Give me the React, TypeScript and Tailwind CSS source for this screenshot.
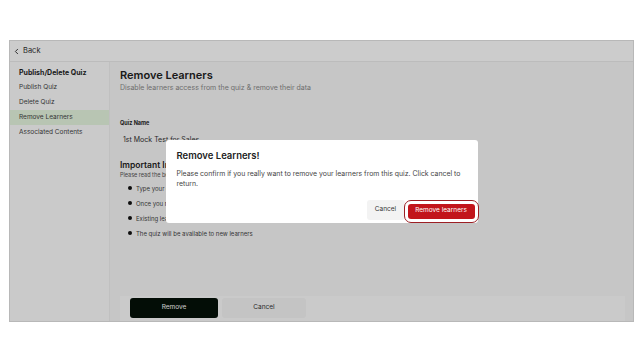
import { ChevronLeft } from 'lucide-react'

const sideItems = ['Publish Quiz', 'Delete Quiz', 'Remove Learners', 'Associated Contents']

const rules = [
  'Type your quiz name to confirm removal',
  'Once you remove, learners lose access',
  'Existing learner data will be deleted',
  'The quiz will be available to new learners',
]

export default function App() {
  return (
    <div className="min-h-screen w-full bg-white pt-[40px] pl-[9px]" style={{ fontFamily: 'Inter, "Noto Sans", sans-serif' }}>
      <div className="relative flex h-[282px] w-[625px] flex-col border border-[#e6e6e6] bg-white text-[#1f1f1f]">
        <div className="flex h-[21px] shrink-0 items-center gap-[2px] border-b border-[#ececec] bg-white pl-[2px] text-[7.5px] text-[#333]">
          <ChevronLeft size={9} strokeWidth={2.5} />
          <span>Back</span>
        </div>
        <div className="flex min-h-0 flex-1">
          <aside className="w-[100px] shrink-0 border-r border-[#f0f0f0] bg-[#fdfdfd] pt-[4px]">
            <div className="px-[9px] text-[7px] font-bold leading-[14px]">Publish/Delete Quiz</div>
            <div className="flex flex-col">
              {sideItems.map((item) => (
                <div
                  key={item}
                  className={`flex h-[15px] items-center px-[9px] text-[6.5px] text-[#444] ${item === 'Remove Learners' ? 'bg-[#e6f7e0]' : ''}`}
                >
                  {item}
                </div>
              ))}
            </div>
          </aside>
          <main className="flex min-w-0 flex-1 flex-col bg-[#f8f8f8]">
            <div className="flex-1 pl-[10px] pt-[6px]">
              <h1 className="text-[11px] font-semibold leading-[14px] text-[#222]">Remove Learners</h1>
              <p className="mt-[1px] text-[7px] text-[#8a8a8a]">Disable learners access from the quiz &amp; remove their data</p>
              <div className="mt-[25px] text-[5.5px] font-bold">Quiz Name</div>
              <div className="mt-[8px] pl-[3px] text-[7px] text-[#333]">1st Mock Test for Sales</div>
              <div className="mt-[15px] text-[8.5px] font-semibold leading-[11px]">Important Information</div>
              <div className="text-[5.5px] text-[#555]">Please read the below points before removing learners</div>
              <ul className="mt-[4px] flex flex-col gap-[6px] pl-[8px]">
                {rules.map((r) => (
                  <li key={r} className="flex h-[9px] items-center gap-[4px] text-[6px] text-[#444]">
                    <span className="h-[4px] w-[4px] rounded-full bg-[#111]" />
                    {r}
                  </li>
                ))}
              </ul>
            </div>
            <div className="ml-[10px] mr-[8px] flex h-[25px] items-start gap-[4px] bg-[#fdfdfd] pl-[10px] pt-[2px]">
              <button className="h-[20px] w-[88px] rounded-[3px] bg-[#041108] text-[6.5px] text-white">Remove</button>
              <button className="h-[20px] w-[84px] rounded-[3px] bg-[#f6f6f6] text-[6.5px] text-[#333]">Cancel</button>
            </div>
          </main>
        </div>

        <div className="absolute inset-[-1px] flex items-center justify-center bg-black/20">
          <div className="flex h-[83px] w-[312px] flex-col rounded-[3px] bg-white pl-[11px] pr-[3px] pt-[10px]">
            <h2 className="text-[9.5px] font-semibold leading-[12px] text-[#222]">Remove Learners!</h2>
            <p className="mt-[7px] text-[6.9px] leading-[10px] text-[#444]">
              Please confirm if you really want to remove your learners from this quiz. Click cancel to return.
            </p>
            <div className="mt-auto mb-[3px] flex items-end justify-end gap-[3px]">
              <button className="h-[20px] w-[38px] rounded-[3px] bg-[#f3f3f3] text-[6.5px] text-[#333]">Cancel</button>
              <button className="mb-[1px] h-[15px] w-[67px] rounded-[3px] bg-[#c2141b] text-[6.5px] text-white outline outline-[1.5px] outline-offset-[3px] outline-[#9c1f24]">
                Remove learners
              </button>
            </div>
          </div>
        </div>
      </div>
    </div>
  )
}
